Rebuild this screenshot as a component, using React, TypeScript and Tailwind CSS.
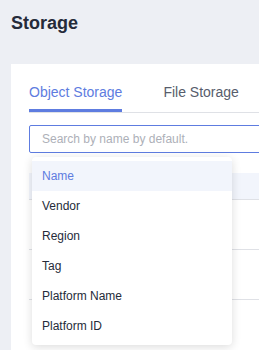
import React from 'react';

const fields = ['Name', 'Vendor', 'Region', 'Tag', 'Platform Name', 'Platform ID'];

const App: React.FC = () => {
  return (
    <div className="w-[259px] h-[350px] overflow-hidden bg-[#edeff4] pl-[11px] pt-[11px] font-['Liberation_Sans',Arial,sans-serif]">
      <h1 className="text-[18px] leading-[24px] font-bold text-[#252b3a]">Storage</h1>

      <div className="mt-[29px] w-[320px] h-[300px] bg-white pt-[18px] pl-[18px]">
        {/* tabs */}
        <div className="flex border-b border-[#dfe1e6]">
          <div className="mr-[41px] pb-[7px] border-b-[3px] border-[#5e7ce0] text-[14px] leading-[20px] text-[#5e7ce0]">
            Object Storage
          </div>
          <div className="pb-[7px] border-b-[3px] border-transparent text-[14px] leading-[20px] text-[#575d6c]">
            File Storage
          </div>
        </div>

        {/* search */}
        <div className="relative mt-[12px]">
          <div className="h-[28px] border border-[#5e7ce0] rounded-[2px] flex items-center pl-[12px] text-[12px] text-[#adb0b8]">
            Search by name by default.
          </div>

          {/* table behind */}
          <div className="mt-[20px]">
            <div className="h-[27px] bg-[#f2f5fc] border-b border-[#dfe1e6]" />
            <div className="h-[50px] border-b border-[#dfe1e6]" />
            <div className="h-[50px] border-b border-[#dfe1e6]" />
          </div>

          {/* dropdown */}
          <div className="absolute left-[3px] top-[32px] w-[200px] bg-white rounded-[4px] py-[4px] shadow-[0_2px_10px_rgba(0,0,0,0.14)]">
            {fields.map((f, i) => (
              <div
                key={f}
                className={`h-[30px] flex items-center pl-[10px] text-[12px] ${i === 0 ? 'bg-[#f2f5fc] text-[#5e7ce0]' : 'text-[#252b3a]'}`}
              >
                {f}
              </div>
            ))}
          </div>
        </div>
      </div>
    </div>
  );
};

export default App;
